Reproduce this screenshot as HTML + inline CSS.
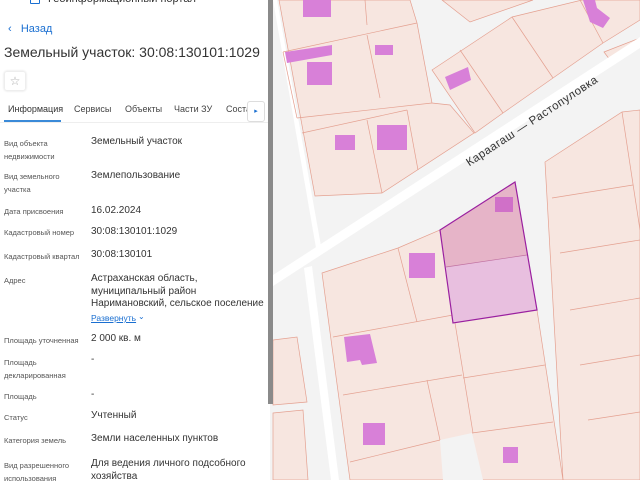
<!DOCTYPE html>
<html><head><meta charset="utf-8"><style>
*{margin:0;padding:0;box-sizing:border-box}
body{width:640px;height:480px;overflow:hidden;background:#fff;font-family:"Liberation Sans",sans-serif;position:relative}
.p{position:absolute;white-space:nowrap}
.l{position:absolute;left:4px;font-size:7.5px;color:#555;line-height:13px}
.v{position:absolute;left:91px;font-size:10px;color:#333;line-height:12.5px;white-space:nowrap}
.t{position:absolute;top:104px;font-size:9px;color:#444}
</style></head><body>
<svg class="p" style="left:270px;top:0" width="370" height="480" viewBox="270 0 370 480">
<rect x="270" y="0" width="370" height="480" fill="#f3f3f3"/>
<g fill="#f7e6e0" stroke="#e4a090" stroke-width="0.7">
<polygon points="279,0 410,0 417,23 432,103 450,105 474,133 382,193 315,196"/>
<polygon points="432,70 512,17 582,0 640,0 640,20 603,43 503,113 475,133"/>
<polygon points="442,0 533,0 470,22"/>
<polygon points="604,52 640,38 640,44 610,60"/>
<polygon points="545,162 622,112 640,110 640,480 563,480"/>
<polygon points="322,273 398,248 440,230 515,182 537,310 563,480 350,480"/>
<polygon points="273,340 297,337 307,402 273,405"/>
<polygon points="273,413 303,410 308,480 273,480"/>
</g>
<polygon points="440,440 472,433 483,480 443,480" fill="#f3f3f3"/>
<polygon points="270,277 640,37 640,48 270,288" fill="#fff"/>
<polygon points="273,0 277,0 321,246 316,248" fill="#fff"/>
<polygon points="304,268 312,266 339,480 331,480" fill="#fff"/>
<g stroke="#e4a090" stroke-width="0.7" fill="none">
<line x1="365" y1="0" x2="367" y2="25"/><line x1="283" y1="52" x2="417" y2="23"/>
<line x1="367" y1="35" x2="380" y2="98"/><line x1="297" y1="118" x2="432" y2="103"/>
<line x1="302" y1="133" x2="407" y2="110"/><line x1="367" y1="120" x2="382" y2="193"/>
<line x1="407" y1="110" x2="418" y2="170"/><line x1="283" y1="52" x2="297" y2="118"/>
<line x1="460" y1="50" x2="503" y2="113"/><line x1="512" y1="17" x2="553" y2="78"/>
<line x1="580" y1="0" x2="603" y2="43"/>
<line x1="552" y1="198" x2="633" y2="185"/><line x1="560" y1="253" x2="640" y2="240"/>
<line x1="570" y1="310" x2="640" y2="298"/><line x1="580" y1="365" x2="640" y2="355"/>
<line x1="588" y1="420" x2="640" y2="412"/><line x1="622" y1="112" x2="640" y2="230"/>
<line x1="398" y1="248" x2="417" y2="322"/><line x1="333" y1="337" x2="453" y2="315"/>
<line x1="455" y1="323" x2="473" y2="433"/><line x1="343" y1="395" x2="462" y2="375"/>
<line x1="463" y1="378" x2="545" y2="365"/><line x1="427" y1="380" x2="440" y2="440"/>
<line x1="350" y1="462" x2="440" y2="440"/><line x1="472" y1="433" x2="553" y2="422"/>
</g>
<polygon points="440,230 515,182 527,255 446,267" fill="#e6b4c8"/>
<polygon points="446,267 527,255 537,310 453,323" fill="#e8bfdf"/>
<line x1="446" y1="267" x2="527" y2="255" stroke="#c070a0" stroke-width="0.7"/>
<polygon points="440,230 515,182 537,310 453,323" fill="none" stroke="#9a20a0" stroke-width="1.2"/>
<g fill="#d880d8">
<rect x="303" y="0" width="28" height="17"/>
<polygon points="285,52 332,45 332,55 287,63"/>
<rect x="307" y="62" width="25" height="23"/>
<rect x="375" y="45" width="18" height="10"/>
<rect x="335" y="135" width="20" height="15"/>
<rect x="377" y="125" width="30" height="25"/>
<polygon points="445,77 468,67 471,80 450,90"/>
<polygon points="583,0 595,0 597,8 610,18 603,28 590,22"/>
<rect x="495" y="197" width="18" height="15" fill="#d070c8"/>
<rect x="409" y="253" width="26" height="25"/>
<polygon points="344,337 370,334 377,363 362,365 360,360 347,362"/>
<rect x="363" y="423" width="22" height="22"/>
<rect x="503" y="447" width="15" height="16"/>
</g>
<text x="0" y="0" transform="translate(534,124) rotate(-33.3)" text-anchor="middle" font-family="Liberation Sans,sans-serif" font-size="11.5" fill="#333" letter-spacing="0.5">Караагаш — Растопуловка</text>
</svg>
<div class="p" style="left:0;top:0;width:268px;height:480px;background:#fff"></div>
<div class="p" style="left:268px;top:0;width:5px;height:404px;background:#8a8a8a"></div>
<div class="p" style="left:4px;top:-4px;width:10px;height:2px;background:#555"></div>
<div class="p" style="left:30px;top:-8px;width:10px;height:12px;border:1.5px solid #1a6fd1;border-radius:1px"></div>
<div class="p" style="left:48px;top:-7px;font-size:11px;color:#333">Геоинформационный портал</div>
<div class="p" style="left:8px;top:23px;font-size:11px;color:#1a6fd1">‹&nbsp;&nbsp;&nbsp;Назад</div>
<div class="p" style="left:4px;top:44px;font-size:14px;color:#333">Земельный участок: 30:08:130101:1029</div>
<div class="p" style="left:4px;top:71px;width:22px;height:20px;border:1px solid #eee;border-radius:3px;box-shadow:0 0 2px #ddd;font-size:12px;color:#aaa;text-align:center;line-height:18px">☆</div>
<div class="t" style="left:8px;color:#333">Информация</div>
<div class="t" style="left:74px">Сервисы</div>
<div class="t" style="left:125px">Объекты</div>
<div class="t" style="left:174px">Части ЗУ</div>
<div class="t" style="left:226px">Соста</div>
<div class="p" style="left:247px;top:101px;width:18px;height:21px;background:#fff;border:1px solid #ddd;border-radius:3px;font-size:7px;color:#1a6fd1;text-align:center;line-height:20px">▸</div>
<div class="p" style="left:0;top:122px;width:268px;height:1px;background:#eee"></div>
<div class="p" style="left:4px;top:120px;width:57px;height:2px;background:#3a8ad8"></div>
<div class="l" style="top:137px">Вид объекта<br>недвижимости</div><div class="v" style="top:136px">Земельный участок</div>
<div class="l" style="top:170px">Вид земельного<br>участка</div><div class="v" style="top:170px">Землепользование</div>
<div class="l" style="top:205px">Дата присвоения</div><div class="v" style="top:205px">16.02.2024</div>
<div class="l" style="top:226px">Кадастровый номер</div><div class="v" style="top:226px">30:08:130101:1029</div>
<div class="l" style="top:250px">Кадастровый квартал</div><div class="v" style="top:249px">30:08:130101</div>
<div class="l" style="top:274px">Адрес</div><div class="v" style="top:273px">Астраханская область,<br>муниципальный район<br>Наримановский, сельское поселение</div>
<div class="p" style="left:91px;top:313px;font-size:8.5px;color:#1a6fd1;text-decoration:underline">Развернуть</div>
<div class="p" style="left:138px;top:312px;font-size:8px;color:#1a6fd1">⌄</div>
<div class="l" style="top:334px">Площадь уточненная</div><div class="v" style="top:333px">2 000 кв. м</div>
<div class="l" style="top:356px">Площадь<br>декларированная</div><div class="v" style="top:354px">-</div>
<div class="l" style="top:390px">Площадь</div><div class="v" style="top:389px">-</div>
<div class="l" style="top:411px">Статус</div><div class="v" style="top:410px">Учтенный</div>
<div class="l" style="top:434px">Категория земель</div><div class="v" style="top:433px">Земли населенных пунктов</div>
<div class="l" style="top:459px">Вид разрешенного<br>использования</div><div class="v" style="top:458px">Для ведения личного подсобного<br>хозяйства</div>
</body></html>
